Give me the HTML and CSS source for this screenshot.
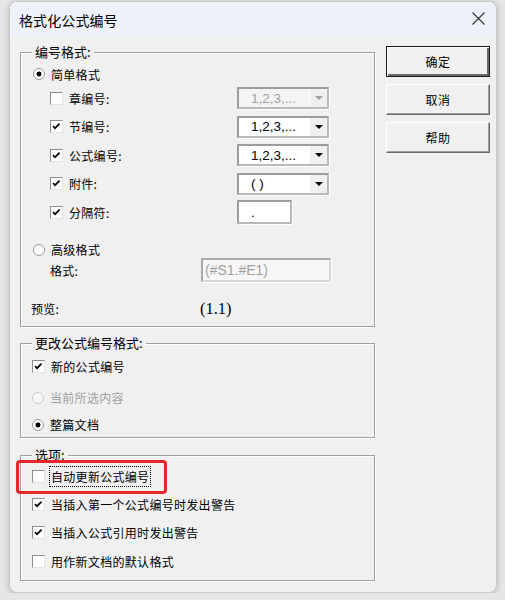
FILE: index.html
```html
<!DOCTYPE html>
<html>
	<head>
		<meta charset="UTF-8">
		<title>格式化公式编号</title>
		<link rel="stylesheet" href="styles.css">
	</head>
	<body>
		<div class="dialog">
			<div class="titlebar">
				<span class="title">格式化公式编号</span>
				<svg class="close" width="13" height="13" viewBox="0 0 13 13"><path d="M0.5 0.5 L12.5 12.5 M12.5 0.5 L0.5 12.5" stroke="#333" stroke-width="1.1" fill="none"/></svg>
			</div>
			<div class="content">
				<div class="left">
					<!-- 编号格式 -->
					<div class="group group1">
						<div class="group-title">编号格式:</div>
						<div class="row radio-row first">
							<span class="radio on"></span>
							<span>简单格式</span>
						</div>
						<div class="field-row">
							<div class="check-label"><span class="check"></span><span>章编号:</span></div>
							<div class="combo disabled"><span class="value">1,2,3,...</span><span class="drop"><svg width="8" height="4" viewBox="0 0 8 4"><polygon points="0,0 8,0 4,4" fill="#a0a0a0"/></svg></span></div>
						</div>
						<div class="field-row">
							<div class="check-label"><span class="check on"><svg width="11" height="11" viewBox="0 0 11 11"><path d="M2 5 L4 7.2 L8.6 2.6" stroke="#000" stroke-width="1.7" fill="none"/></svg></span><span>节编号:</span></div>
							<div class="combo"><span class="value">1,2,3,...</span><span class="drop"><svg width="8" height="4" viewBox="0 0 8 4"><polygon points="0,0 8,0 4,4" fill="#000"/></svg></span></div>
						</div>
						<div class="field-row">
							<div class="check-label"><span class="check on"><svg width="11" height="11" viewBox="0 0 11 11"><path d="M2 5 L4 7.2 L8.6 2.6" stroke="#000" stroke-width="1.7" fill="none"/></svg></span><span>公式编号:</span></div>
							<div class="combo"><span class="value">1,2,3,...</span><span class="drop"><svg width="8" height="4" viewBox="0 0 8 4"><polygon points="0,0 8,0 4,4" fill="#000"/></svg></span></div>
						</div>
						<div class="field-row">
							<div class="check-label"><span class="check on"><svg width="11" height="11" viewBox="0 0 11 11"><path d="M2 5 L4 7.2 L8.6 2.6" stroke="#000" stroke-width="1.7" fill="none"/></svg></span><span>附件:</span></div>
							<div class="combo"><span class="value">( )</span><span class="drop"><svg width="8" height="4" viewBox="0 0 8 4"><polygon points="0,0 8,0 4,4" fill="#000"/></svg></span></div>
						</div>
						<div class="field-row">
							<div class="check-label"><span class="check on"><svg width="11" height="11" viewBox="0 0 11 11"><path d="M2 5 L4 7.2 L8.6 2.6" stroke="#000" stroke-width="1.7" fill="none"/></svg></span><span>分隔符:</span></div>
							<div class="edit sep"><span class="value">.</span></div>
						</div>
						<div class="row radio-row adv">
							<span class="radio"></span>
							<span>高级格式</span>
						</div>
						<div class="format-row">
							<span class="format-label">格式:</span>
							<div class="edit wide disabled"><span class="value">(#S1.#E1)</span></div>
						</div>
						<div class="preview-row">
							<span class="preview-label">预览:</span>
							<span class="preview">(1.1)</span>
						</div>
					</div>

					<!-- 更改公式编号格式 -->
					<div class="group group2">
						<div class="group-title">更改公式编号格式:</div>
						<div class="row item r1">
							<span class="check on"><svg width="11" height="11" viewBox="0 0 11 11"><path d="M2 5 L4 7.2 L8.6 2.6" stroke="#000" stroke-width="1.7" fill="none"/></svg></span>
							<span>新的公式编号</span>
						</div>
						<div class="row item r2 gray">
							<span class="radio disabled"></span>
							<span>当前所选内容</span>
						</div>
						<div class="row item r3">
							<span class="radio on"></span>
							<span>整篇文档</span>
						</div>
					</div>

					<!-- 选项 -->
					<div class="group group3">
						<div class="group-title">选项:</div>
						<div class="row item o1">
							<span class="check"></span>
							<span class="focus">自动更新公式编号</span>
							<div class="mark"></div>
						</div>
						<div class="row item o2">
							<span class="check on"><svg width="11" height="11" viewBox="0 0 11 11"><path d="M2 5 L4 7.2 L8.6 2.6" stroke="#000" stroke-width="1.7" fill="none"/></svg></span>
							<span>当插入第一个公式编号时发出警告</span>
						</div>
						<div class="row item o3">
							<span class="check on"><svg width="11" height="11" viewBox="0 0 11 11"><path d="M2 5 L4 7.2 L8.6 2.6" stroke="#000" stroke-width="1.7" fill="none"/></svg></span>
							<span>当插入公式引用时发出警告</span>
						</div>
						<div class="row item o4">
							<span class="check"></span>
							<span>用作新文档的默认格式</span>
						</div>
					</div>
				</div>

				<div class="buttons">
					<div class="btn default">确定</div>
					<div class="btn">取消</div>
					<div class="btn">帮助</div>
				</div>
			</div>
		</div>
	</body>
</html>
```

FILE: styles.css
```css
body{
	margin: 0;
	padding: 0;
	background: #e6e6e6;
	font-family: "Noto Sans CJK SC", "Noto Sans", sans-serif;
	font-size: 12px;
	color: #000;
}
.dialog{
	box-sizing: border-box;
	width: 488px;
	height: 592px;
	margin: 1px 0 0 9px;
	background: #f0f0f0;
	border: 1px solid #c9c9c9;
	border-radius: 8px;
	overflow: hidden;
	box-shadow: 0 1px 6px rgba(0,0,0,0.22);
}
.titlebar{
	height: 35px;
	background: #eef1f8;
	display: flex;
	align-items: center;
	justify-content: space-between;
	padding: 0 11px 0 9px;
}
.title{
	font-size: 14px;
	letter-spacing: 0.1px;
}
.close{
	display: block;
	margin-top: -2px;
}
.content{
	display: flex;
	gap: 11px;
	padding: 7px 6px 0 10px;
}
.left{
	width: 355px;
}

/* group box */
.group{
	border: 1px solid #a0a0a0;
	box-shadow: inset 1px 1px 0 #fff, 1px 1px 0 #fff;
}
.group-title{
	width: fit-content;
	margin: -9px 0 0 11px;
	padding: 0 3px;
	background: #f0f0f0;
	font-size: 13px;
	line-height: 16px;
}
.group1{
	margin-top: 8px;
	padding-bottom: 7px;
}
.group2{
	margin-top: 16px;
	padding-bottom: 2px;
}
.group3{
	margin-top: 17px;
	padding-bottom: 8px;
}
.row{
	display: flex;
	align-items: center;
	letter-spacing: 0.3px;
}

/* check / radio */
.check{
	box-sizing: border-box;
	width: 13px;
	height: 13px;
	background: #fff;
	border: 1px solid;
	border-color: #8e8e8e #e3e3e3 #e3e3e3 #8e8e8e;
	display: flex;
	align-items: center;
	justify-content: center;
	flex: none;
}
.check svg{
	display: block;
}
.radio{
	box-sizing: border-box;
	width: 12px;
	height: 12px;
	border-radius: 50%;
	border: 1px solid #9a9a9a;
	background: #fff;
	flex: none;
}
.radio.on{
	background: radial-gradient(circle, #000 0 2.2px, #fff 2.8px);
}
.radio.disabled{
	border-color: #cdcdcd;
	background: #f7f7f7;
}
.gray{
	color: #a0a0a0;
}

/* group 1 */
.radio-row{
	height: 20px;
	padding-left: 12px;
	gap: 6px;
}
.radio-row.first{
	margin-top: 4px;
}
.radio-row.adv{
	margin-top: 15px;
	height: 16px;
}
.field-row{
	display: flex;
	align-items: center;
	height: 28.5px;
	padding-left: 29px;
}
.check-label{
	display: flex;
	align-items: center;
	gap: 6px;
	width: 187px;
	letter-spacing: 0.3px;
}
.combo, .edit{
	box-sizing: border-box;
	height: 22px;
	background: #fff;
	border: 2px solid;
	border-color: #9c9c9c #b9b9b9 #b9b9b9 #9c9c9c;
	box-shadow: 1px 1px 0 #fff;
	display: flex;
	align-items: center;
	font-family: "Liberation Sans", Arial, sans-serif;
	font-size: 13.5px;
}
.combo{
	width: 92px;
	justify-content: space-between;
}
.combo .value, .edit .value{
	padding-left: 12px;
}
.combo.disabled{
	background: #f4f4f4;
	color: #a0a0a0;
}
.drop{
	box-sizing: border-box;
	width: 18px;
	height: 18px;
	background: #f0f0f0;
	border-left: 1px solid #fff;
	display: flex;
	align-items: center;
	justify-content: center;
}
.drop svg{
	display: block;
}
.edit.sep{
	width: 55px;
	height: 24px;
}
.format-row{
	display: flex;
	align-items: center;
	height: 25px;
	padding-left: 29px;
}
.format-label{
	width: 151px;
	letter-spacing: 0.3px;
}
.edit.wide{
	width: 130px;
	height: 24px;
}
.edit.wide .value{
	padding-left: 2px;
	font-size: 14px;
}
.edit.disabled{
	background: #f7f7f7;
	color: #a0a0a0;
	border-color: #a8a8a8 #d8d8d8 #d8d8d8 #a8a8a8;
}
.preview-row{
	display: flex;
	align-items: center;
	height: 20px;
	margin-top: 16px;
	padding-left: 10px;
}
.preview-label{
	width: 169px;
	letter-spacing: 0.3px;
}
.preview{
	font-family: "Liberation Serif", "Times New Roman", serif;
	font-size: 16.5px;
}

/* groups 2 and 3 */
.item{
	height: 20px;
	padding-left: 11px;
	gap: 6px;
}
.r1{ margin-top: 6px; }
.r2{ margin-top: 11px; }
.r3{ margin-top: 7px; }
.o1{ margin-top: 4px; position: relative; }
.o2{ margin-top: 8px; }
.o3{ margin-top: 8px; }
.o4{ margin-top: 9px; }
.focus{
	outline: 1px dotted #000;
	outline-offset: 0;
	padding: 1px 1px;
	margin-left: -1px;
	line-height: 17px;
}
.mark{
	position: absolute;
	left: -5px;
	top: -7px;
	box-sizing: border-box;
	width: 151px;
	height: 34px;
	border: 3px solid #e5262b;
	border-radius: 4px;
}

/* buttons */
.buttons{
	width: 104px;
	padding-top: 2px;
	display: flex;
	flex-direction: column;
	gap: 7px;
}
.btn{
	box-sizing: border-box;
	height: 31px;
	display: flex;
	align-items: center;
	justify-content: center;
	background: #f0f0f0;
	border: 1px solid;
	border-color: #fff #696969 #696969 #fff;
	box-shadow: inset -1px -1px 0 #a0a0a0;
	letter-spacing: 0.5px;
}
.btn.default{
	border: 1px solid #1a1a1a;
	box-shadow: inset 1px 1px 0 #fff, inset -2px -2px 0 #696969;
}
```
